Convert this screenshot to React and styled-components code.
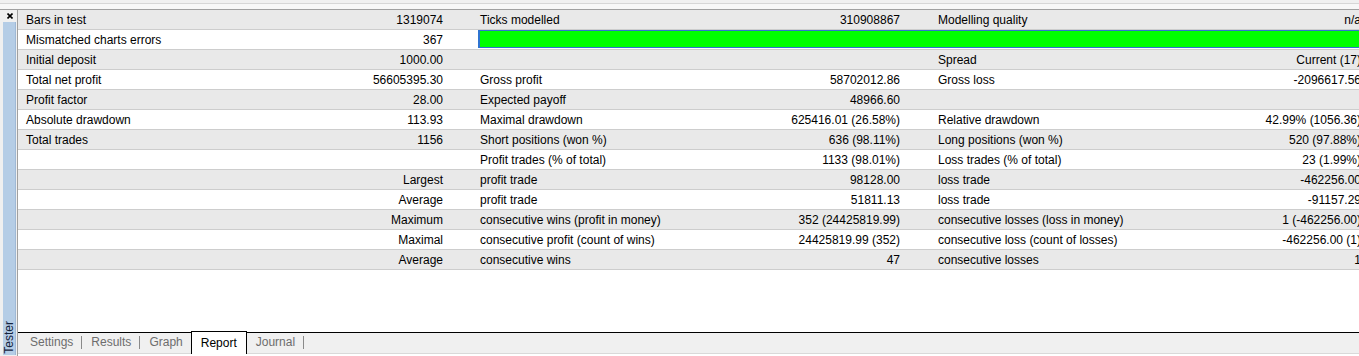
import React from "react";
import styled, { createGlobalStyle } from "styled-components";

const Global = createGlobalStyle`
  html, body { margin: 0; padding: 0; }
  body {
    width: 1359px; height: 356px; overflow: hidden;
    background: #f0f0f0;
    font-family: "Liberation Sans", Arial, sans-serif;
    font-size: 12px; color: #000;
  }
`;

const Frame = styled.div`
  width: 1359px; height: 356px;
  display: flex; flex-direction: column;
  overflow: hidden;
`;

const TopStrip = styled.div`
  height: 9px; flex: none;
  background: linear-gradient(#f0f0f0 0 3px, #d6d6d6 3px 4px, #f7f7f7 4px 9px);
  border-bottom: 1px solid #a0a0a0;
`;

const Body = styled.div`
  flex: 1; display: flex; min-height: 0;
`;

const Sidebar = styled.div`
  width: 14px; flex: none;
  padding-left: 3px;
  border-right: 1px solid #a0a0a0;
  background: #f0f0f0;
  display: flex; flex-direction: column;
`;

const CloseBox = styled.div`
  height: 12px; flex: none;
  display: flex; align-items: center; justify-content: center;
  padding-right: 1px;
`;

const BlueStrip = styled.div`
  flex: 1; width: 12px;
  background: #b5cde6;
  border-right: 1px solid #9fb9d6;
  display: flex; flex-direction: column; justify-content: flex-end; align-items: center;
  padding-bottom: 1px;
  margin-bottom: 1px;
`;

const VerticalLabel = styled.span`
  writing-mode: vertical-rl;
  transform: rotate(180deg);
  font-size: 12px; line-height: 12px;
  color: #14233e;
`;

const Main = styled.div`
  flex: 1; min-width: 0;
  display: flex; flex-direction: column;
  background: #fff;
  overflow: hidden;
`;

const Table = styled.div`
  flex: none;
  display: flex; flex-direction: column;
`;

const Row = styled.div`
  display: grid;
  grid-template-columns: 227px 227px 229px 229px 229px 229px;
  height: 18px;
  padding-top: 1px;
  border-bottom: 1px solid #cdcdcd;
  background: ${p => (p.$shade ? "#e9e9e9" : "#ffffff")};
  line-height: 19px;
  white-space: nowrap;
`;

const Label = styled.div`
  padding-left: 8px;
`;

const Value = styled.div`
  text-align: right;
  padding-right: ${p => p.$pr || 29}px;
`;

const QualityBar = styled.div`
  grid-column: 3 / -1;
  align-self: start;
  margin-top: -1px;
  margin-left: 6px;
  height: 16px;
  background: #00ff00;
  border: 1px solid #2f74d0;
  border-left-width: 2px;
`;

const Blank = styled.div`
  flex: 1;
  background: #fff;
`;

const TabBar = styled.div`
  flex: none;
  height: 20px;
  border-top: 1px solid #000;
  border-bottom: 1px solid #d9d9d9;
  margin-bottom: 2px;
  background: #f0f0f0;
  display: flex; align-items: stretch;
  padding-left: 3px;
`;

const Tab = styled.div`
  display: flex; align-items: center;
  padding: 0 ${p => (p.$active ? 9 : 8)}px 2px 9px;
  color: ${p => (p.$active ? "#000" : "#6d6d6d")};
  line-height: 18px;
  ${p =>
    p.$active &&
    `
    background: #fff;
    border: 1px solid #000;
    border-bottom: none;
    margin-top: -2px;
    margin-bottom: -1px;
    padding-top: 1px;
  `}
`;

const Sep = styled.span`
  align-self: center;
  width: 1px; height: 13px;
  background: #8a8a8a;
  margin-top: -2px;
`;

const rows = [
  ["Bars in test", "1319074", "Ticks modelled", "310908867", "Modelling quality", "n/a"],
  ["Mismatched charts errors", "367", null],
  ["Initial deposit", "1000.00", "", "", "Spread", "Current (17)"],
  ["Total net profit", "56605395.30", "Gross profit", "58702012.86", "Gross loss", "-2096617.56"],
  ["Profit factor", "28.00", "Expected payoff", "48966.60", "", ""],
  ["Absolute drawdown", "113.93", "Maximal drawdown", "625416.01 (26.58%)", "Relative drawdown", "42.99% (1056.36)"],
  ["Total trades", "1156", "Short positions (won %)", "636 (98.11%)", "Long positions (won %)", "520 (97.88%)"],
  ["", "", "Profit trades (% of total)", "1133 (98.01%)", "Loss trades (% of total)", "23 (1.99%)"],
  ["", "Largest", "profit trade", "98128.00", "loss trade", "-462256.00"],
  ["", "Average", "profit trade", "51811.13", "loss trade", "-91157.29"],
  ["", "Maximum", "consecutive wins (profit in money)", "352 (24425819.99)", "consecutive losses (loss in money)", "1 (-462256.00)"],
  ["", "Maximal", "consecutive profit (count of wins)", "24425819.99 (352)", "consecutive loss (count of losses)", "-462256.00 (1)"],
  ["", "Average", "consecutive wins", "47", "consecutive losses", "1"],
];

const tabs = ["Settings", "Results", "Graph", "Report", "Journal"];
const activeTab = "Report";

function CloseIcon() {
  return (
    <svg width="6" height="6" viewBox="0 0 6 6">
      <path d="M0.5 0.5 L5.5 5.5 M5.5 0.5 L0.5 5.5" stroke="#000" strokeWidth="1.6" />
    </svg>
  );
}

export default function App() {
  return (
    <>
      <Global />
      <Frame>
        <TopStrip />
        <Body>
          <Sidebar>
            <CloseBox><CloseIcon /></CloseBox>
            <BlueStrip>
              <VerticalLabel>Tester</VerticalLabel>
            </BlueStrip>
          </Sidebar>
          <Main>
            <Table>
              {rows.map((r, i) => (
                <Row key={i} $shade={i % 2 === 0}>
                  <Label>{r[0]}</Label>
                  <Value>{r[1]}</Value>
                  {r[2] === null ? (
                    <QualityBar />
                  ) : (
                    <>
                      <Label>{r[2]}</Label>
                      <Value $pr={30}>{r[3]}</Value>
                      <Label>{r[4]}</Label>
                      <Value $pr={27}>{r[5]}</Value>
                    </>
                  )}
                </Row>
              ))}
            </Table>
            <Blank />
            <TabBar>
              {tabs.map((t, i) => {
                const active = t === activeTab;
                const next = tabs[i + 1];
                const showSep = !active && next !== activeTab;
                return (
                  <React.Fragment key={t}>
                    <Tab $active={active}>{t}</Tab>
                    {showSep && <Sep />}
                  </React.Fragment>
                );
              })}
            </TabBar>
          </Main>
        </Body>
      </Frame>
    </>
  );
}
